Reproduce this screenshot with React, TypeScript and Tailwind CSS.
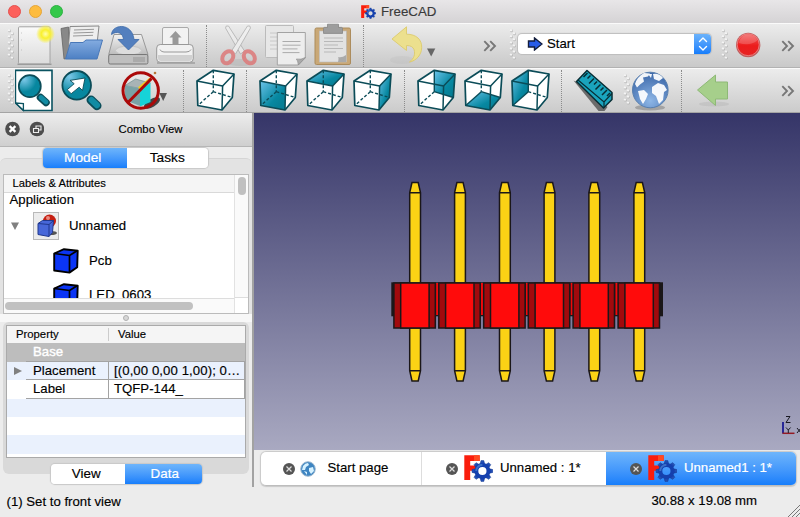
import React from "react";

type Pt = [number, number];

// Corner points of the isometric cube, relative to its own origin.
const C: Record<string, Pt> = {
  ftl: [0, 11], ftr: [25.6, 16], fbl: [0.8, 35.5], fbr: [25, 40],
  btl: [16.3, 0.3], btr: [37, 4], bbr: [35.3, 27.5], bbl: [16.3, 21.7],
};
const pts = (...names: string[]) => names.map((n) => C[n].join(",")).join(" ");

const FACES: Record<string, string[]> = {
  front: ["ftl", "ftr", "fbr", "fbl"],
  top: ["ftl", "ftr", "btr", "btl"],
  right: ["ftr", "btr", "bbr", "fbr"],
  rear: ["btl", "btr", "bbr", "bbl"],
  bottom: ["fbl", "fbr", "bbr", "bbl"],
  left: ["ftl", "btl", "bbl", "fbl"],
};

function Cell({ x, y, w, className, children }: { x: number; y: number; w: number; className: string; children: React.ReactNode }) {
  return (
    <svg viewBox={`${x} ${y} ${w} 44`} className={`-mt-px h-11 shrink-0 ${className}`}>
      {children}
    </svg>
  );
}

function ViewCube({ face, className }: { face?: string; className: string }) {
  const dash = { stroke: "#0b4c58", strokeWidth: 1.4, strokeDasharray: "3 2", fill: "none" };
  const solid = { stroke: "#0b4c58", strokeWidth: 1.4, fill: "none" };
  const vert = face === "rear" || face === "left" ? solid : dash;
  const back = face === "rear" || face === "bottom" ? solid : dash;
  const side = face === "bottom" || face === "left" ? solid : dash;
  return (
    <svg viewBox="-1 -2 39 44" className={`-mt-px h-11 w-[39px] shrink-0 ${className}`} strokeLinejoin="round">
      <polygon points={pts("ftl", "btl", "btr", "bbr", "fbr", "fbl")} fill="#fff" />
      {face && <polygon points={pts(...FACES[face])} fill="url(#teal)" />}
      <polyline points={pts("btl", "bbl")} {...vert} />
      <polyline points={pts("bbl", "bbr")} {...back} />
      <polyline points={pts("bbl", "fbl")} {...side} />
      <polygon points={pts("ftl", "btl", "btr", "bbr", "fbr", "fbl")} fill="none" stroke="#0b4c58" strokeWidth="1.7" />
      <polyline points={pts("ftl", "ftr", "btr")} fill="none" stroke="#0b4c58" strokeWidth="1.5" />
      <polyline points={pts("ftr", "fbr")} fill="none" stroke="#0b4c58" strokeWidth="1.5" />
    </svg>
  );
}

function Grip({ className }: { className: string }) {
  return (
    <svg viewBox="0 0 8 32" className={`-mt-[3px] h-8 w-2 shrink-0 ${className}`}>
      {[0, 1, 2, 3, 4].map((i) => (
        <g key={i}>
          <circle cx="2.4" cy={2.7 + i * 6.1} r="1.5" fill="#b5b5b5" />
          <circle cx="2" cy={2.2 + i * 6.1} r="1.2" fill="#f4f4f4" />
          <circle cx="5.4" cy={5.7 + i * 6.1} r="1.5" fill="#b5b5b5" />
          <circle cx="5" cy={5.2 + i * 6.1} r="1.2" fill="#f4f4f4" />
        </g>
      ))}
    </svg>
  );
}

function Sep({ className }: { className: string }) {
  return <div className={`h-[42px] w-0 shrink-0 border-l border-dotted border-[#8b8b8b] ${className}`} />;
}

function More({ className }: { className: string }) {
  return (
    <svg viewBox="0 0 14 12" className={`h-3 w-3.5 shrink-0 ${className}`} fill="none" stroke="#777" strokeWidth="1.9">
      <path d="M1.3 1.2 6 6 1.3 10.8M7.2 1.2 12 6 7.2 10.8" />
    </svg>
  );
}

function Logo({ className }: { className: string }) {
  return (
    <svg viewBox="0 0 29 27" className={`shrink-0 ${className}`}>
      <path d="M.3.3h15.4v5.8H6.2v4.5h7v5.2h-7V25H.3z" fill="#fa1d0c" />
      <path d="M10 .3h5.7v5.8H10z" fill="#ff4a22" />
      <g transform="translate(18.4 16)">
        {[0, 45, 90, 135, 180, 225, 270, 315].map((a) => (
          <path key={a} transform={`rotate(${a})`} d="M-2.4-6.5-1.4-10.4H1.4L2.4-6.5z" fill="url(#gear)" stroke="#12368c" strokeWidth=".5" />
        ))}
        <circle r="6" fill="none" stroke="#1540ae" strokeWidth="3.8" />
        <path d="M-6.2 0A6.2 6.2 0 0 1 0-6.2" fill="none" stroke="#3b70c8" strokeWidth="2" />
      </g>
    </svg>
  );
}

function Close({ className }: { className: string }) {
  return (
    <svg viewBox="0 0 12 12" className={`h-3 w-3 shrink-0 ${className}`}>
      <circle cx="6" cy="6" r="6" fill="#555" />
      <path d="m3.5 3.5 5 5m0-5-5 5" stroke="#ddd" strokeWidth="1.2" />
    </svg>
  );
}

function Defs() {
  return (
    <svg className="absolute h-0 w-0">
      <defs>
        <linearGradient id="teal" x1="0" y1="0" x2=".8" y2=".8">
          <stop offset="0" stopColor="#6cc4ea" /><stop offset=".75" stopColor="#0788a1" /><stop offset="1" stopColor="#067f96" />
        </linearGradient>
        <radialGradient id="lens" cx=".25" cy=".2" r=".8">
          <stop offset="0" stopColor="#7cc8e8" /><stop offset=".7" stopColor="#07879f" />
        </radialGradient>
        <linearGradient id="paper" x2="0" y2="1"><stop stopColor="#fafafa" /><stop offset="1" stopColor="#dcdcdc" /></linearGradient>
        <linearGradient id="metal" x2="0" y2="1"><stop stopColor="#f2f2f2" /><stop offset="1" stopColor="#bcbcbc" /></linearGradient>
        <linearGradient id="blue" x2="0" y2="1"><stop stopColor="#84ace0" /><stop offset="1" stopColor="#4d80c4" /></linearGradient>
        <radialGradient id="sun"><stop stopColor="#fffdb0" /><stop offset=".45" stopColor="#f9f02e" /><stop offset=".7" stopColor="#f8f04a" stopOpacity=".75" /><stop offset="1" stopColor="#f8f04a" stopOpacity="0" /></radialGradient>
        <radialGradient id="globe" cx=".5" cy=".8" r=".8"><stop stopColor="#8db6e6" /><stop offset="1" stopColor="#3a66a8" /></radialGradient>
        <linearGradient id="gear" x2="0" y2="1"><stop stopColor="#2a58bc" /><stop offset="1" stopColor="#0f38a8" /></linearGradient>
        <linearGradient id="rec" x2="0" y2="1"><stop stopColor="#f26060" /><stop offset=".55" stopColor="#ec1c1c" /><stop offset="1" stopColor="#e52323" /></linearGradient>
      </defs>
    </svg>
  );
}

function FileBar() {
  return (
    <div className="flex h-[45px] shrink-0 items-center border-b border-[#b2b2b2] border-t border-t-[#fafafa] bg-gradient-to-b from-[#ececec] to-[#c9c9c9]">
      <Grip className="ml-[7px]" />
      <Cell x={15} y={23} w={41} className="w-[41px]">
        <path d="M17.5 64.2h34" stroke="#999" strokeWidth="1.5" />
        <rect x="18.5" y="26.8" width="31.5" height="37" rx="1" fill="url(#paper)" stroke="#a4a4a4" />
        <path d="M21 40h.8m-.8 10h.8m-.8-17h.8" stroke="#bbb" />
        <circle cx="45.5" cy="34" r="9.5" fill="url(#sun)" />
      </Cell>
      <Cell x={56} y={23} w={50} className="w-[50px]">
        <path d="M61 28.5 68.5 27v31L64 59z" fill="#888" stroke="#666" strokeWidth=".8" />
        <path d="M70 26.5 99 26l-2 18-29 8z" fill="#eee" stroke="#888" />
        <path d="m74 30 20-.7M73.5 33l20-.7M73 36l20-.7" stroke="#999" />
        <path d="M70.5 42.5h12.5l3-2.5h16.5l-5.5 19H65.5z" fill="url(#blue)" stroke="#4978b8" />
      </Cell>
      <Cell x={106} y={23} w={46} className="w-[46px]">
        <path d="M114 34.5h27.5l6.5 20H108.7z" fill="url(#metal)" stroke="#999" />
        <ellipse cx="128.5" cy="50.5" rx="13" ry="4.5" fill="#ddd" stroke="#c5c5c5" />
        <rect x="108.7" y="54.5" width="39.2" height="9.5" rx="1.5" fill="#bfbfbf" stroke="#777" />
        <path d="M134 57v5m2-5v5m2-5v5m2-5v5m2-5v5m2-5v5" stroke="#858585" strokeWidth=".7" />
        <path d="M111.5 34.5C112 24 132 22 134 39.5h5L128.5 50 118 39.5h5.5c-.5-7-7-9-12-5z" fill="#537fbe" stroke="#3a68a8" strokeWidth=".8" />
      </Cell>
      <Cell x={152} y={23} w={47} className="w-[47px]">
        <path d="M157 63h38" stroke="#aaa" strokeWidth="2" />
        <path d="M162.5 48V29q0-1.5 1.5-1.5h23q1.5 0 1.5 1.5v19z" fill="#f2f2f2" stroke="#aaa" />
        <path d="m175.5 31 6 6.5h-3v7h-6v-7h-3z" fill="#999" />
        <rect x="156.7" y="44.5" width="36.5" height="17.8" rx="3.5" fill="#f1f1f1" stroke="#999" />
        <path d="M158 55h34v3q0 3-3 3h-28q-3 0-3-3z" fill="#d1d1d1" />
        <path d="M160 49.5q1 2.5 4 2.5h22q4 0 5-2.5" fill="none" stroke="#999" />
      </Cell>
      <Sep className="ml-[7px]" />
      <Cell x={207} y={23} w={53} className="w-[53px] opacity-70">
        <ellipse cx="241" cy="62.5" rx="13" ry="3.5" fill="#aaa" opacity=".5" />
        <path d="M225.5 28q0-3 3-2l16 25-4 3z" fill="#efefef" stroke="#999" strokeWidth=".8" />
        <path d="M250.5 28q0-3-3-2l-16 25 4 3z" fill="#f4f4f4" stroke="#999" strokeWidth=".8" />
        <ellipse cx="227.8" cy="57.3" rx="5" ry="6.5" fill="none" stroke="#df6666" strokeWidth="4" transform="rotate(35 227.8 57.3)" />
        <ellipse cx="249.3" cy="57.3" rx="5" ry="6.5" fill="none" stroke="#df6666" strokeWidth="4" transform="rotate(-35 249.3 57.3)" />
      </Cell>
      <Cell x={260} y={23} w={50} className="w-[50px]">
        <rect x="265.5" y="25.5" width="28" height="32" rx="1" fill="#e7e7e7" stroke="#bbb" />
        <path d="M270 33h14m-14 4h12m-12 4h12m-12 4h12m-12 4h8" stroke="#c8c8c8" />
        <path d="M277.3 32.5h28V58l-7 7h-21z" fill="#ededed" stroke="#a3a3a3" />
        <path d="M298.3 65q-.5-5-2-6 5 1 9-1.5z" fill="#aaa" stroke="#888" strokeWidth=".6" />
        <path d="M282.5 41.5h18m-18 3.7h18m-18 3.7h15m-15 3.7h17" stroke="#ababab" />
      </Cell>
      <Cell x={310} y={23} w={46} className="w-[46px]">
        <rect x="315" y="28" width="35.5" height="36.5" rx="1.5" fill="#c9a877" stroke="#ac8c5d" />
        <rect x="319.3" y="31" width="27" height="31" fill="#e2e2e2" stroke="#bbb" strokeWidth=".6" />
        <path d="M324 38h19m-19 3.5h19M324 45h14m-14 3.5h19M324 52h12" stroke="#b8b8b8" />
        <path d="M338 62q1-4 0-5 4 1 8-2v7z" fill="#aaa" />
        <path d="M327.5 24.2h11v3.2h3q1 0 1 1v5h-19v-5q0-1 1-1h3z" fill="#9d9d9d" stroke="#858585" strokeWidth=".8" />
      </Cell>
      <Sep className="ml-[7px]" />
      <Cell x={364} y={23} w={76} className="w-[76px]">
        <ellipse cx="402" cy="60" rx="12" ry="4" fill="#aaa" opacity=".15" />
        <path d="M392 39 406.5 26.8V34.2c10 0 15.5 5.5 15.2 13.5-.3 7.5-5.5 13-12.2 14.3 4.5-3.5 6-7.5 4.5-12.5q-1.5-4-7.5-4V50.5z" fill="#ece08e" stroke="#dccb6c" strokeWidth=".9" strokeLinejoin="round" />
        <path d="M427 48.5h8.3L431.2 56.5z" fill="#666" />
      </Cell>
      <More className="ml-[43px]" />
      <Grip className="ml-[12px]" />
      <div className="-mt-[3px] ml-px flex h-[20px] w-[193px] shrink-0 items-center overflow-hidden rounded-[4px] bg-white pl-[9px] shadow-[0_0_1px_1px_#bdbdbd]">
        <svg viewBox="0 0 16 14" className="h-3.5 w-4"><path d="M1.5 4H7.5V1L15 7 7.5 13v-3h-6z" fill="#285ce7" stroke="#131d3c" strokeWidth="1.4" /></svg>
        <span className="ml-[4px] text-[13.2px] leading-5">Start</span>
        <div className="ml-auto flex h-full w-[17px] items-center justify-center bg-gradient-to-b from-[#6bb3fb] to-[#147dfb]">
          <svg viewBox="0 0 10 14" className="h-3.5 w-2.5" fill="none" stroke="#fff" strokeWidth="1.4" strokeLinecap="round" strokeLinejoin="round"><path d="m1.5 4.5 3.5-3.5 3.5 3.5m-7 5 3.5 3.5 3.5-3.5" /></svg>
        </div>
      </div>
      <Grip className="ml-[10px]" />
      <Cell x={730} y={23} w={40} className="w-[40px]">
        <circle cx="749.2" cy="45" r="12.2" fill="#bf5b5b" /><circle cx="749.2" cy="44.7" r="11" fill="url(#rec)" stroke="#ef8a8a" strokeWidth=".8" />
        <path d="M739.7 43q2-8.5 9.5-8.5 7 0 9 6-7 6-18.5 2.5z" fill="#fff" opacity=".18" />
      </Cell>
      <More className="ml-[12px]" />
    </div>
  );
}

function ViewBar() {
  return (
    <div className="flex h-[45px] shrink-0 items-center border-b border-[#a4a4a4] border-t border-t-[#fafafa] bg-gradient-to-b from-[#ececec] to-[#cbcbcb]">
      <Grip className="ml-[7px]" />
      <Cell x={15} y={68} w={43} className="w-[43px]">
        <path d="M15.4 70.4H52v40.1H23.4l-8-7.8z" fill="#fff" stroke="#0b5361" strokeWidth="1.6" />
        <path d="m15.6 103 7.8 7.3v-6.8z" fill="#fff" stroke="#0b5361" strokeWidth="1.3" />
        <path d="m40.5 97.5 5.5 5" stroke="#0b4c58" strokeWidth="7.5" strokeLinecap="round" />
        <path d="m41 97.5 5 4.5" stroke="#118ba3" strokeWidth="4.8" strokeLinecap="round" />
        <circle cx="29.8" cy="86.2" r="11" fill="url(#lens)" stroke="#0b4c58" strokeWidth="1.7" />
      </Cell>
      <Cell x={58} y={68} w={54} className="w-[54px]">
        <path d="m91 100 6 5.7" stroke="#0b4c58" strokeWidth="9" strokeLinecap="round" />
        <path d="m91.5 100 5.5 5.2" stroke="#118ba3" strokeWidth="6" strokeLinecap="round" />
        <circle cx="76.7" cy="85.3" r="14.3" fill="url(#lens)" stroke="#0b4c58" strokeWidth="1.8" />
        <path d="m85 78-2.5 12.5-3.3-3.3-8 6.5-4-4 7-6-4.2-3.3z" fill="#fff" stroke="#0b4c58" strokeWidth=".9" />
      </Cell>
      <Cell x={112} y={68} w={58} className="w-[58px]">
        <ellipse cx="152" cy="103" rx="9" ry="4" fill="#444" transform="rotate(-30 152 103)" />
        <path d="M125 85.5 135.5 79 150.5 83 140 88.5z" fill="#a8b4b6" stroke="#688" strokeWidth=".6" />
        <path d="M125 85.5 140 88.5V106l-15-6z" fill="#79a2a5" />
        <path d="M140 88.5 150.5 83v19L140 106.5z" fill="#16d3d8" />
        <path d="m139 88.5 12-10" stroke="#f0cd1d" strokeWidth="3" />
        <circle cx="155" cy="73" r="1.3" fill="#b9773a" />
        <path d="m127.5 103 24-24.5" stroke="#ab0909" strokeWidth="3" />
        <circle cx="140.7" cy="90.5" r="17.7" fill="none" stroke="#ab0909" strokeWidth="3" />
        <path d="M159.3 93h7.7l-3.8 8z" fill="#555" />
      </Cell>
      <Sep className="ml-[13px]" />
      <ViewCube className="ml-[12px]" />
      <Sep className="ml-[11px]" />
      <ViewCube face="front" className="ml-[12px]" />
      <ViewCube face="top" className="ml-[8px]" />
      <ViewCube face="right" className="ml-[8px]" />
      <Sep className="ml-[12px]" />
      <ViewCube face="rear" className="ml-[12px]" />
      <ViewCube face="bottom" className="ml-[8px]" />
      <ViewCube face="left" className="ml-[8px]" />
      <Sep className="ml-[11px]" />
      <Cell x={563} y={68} w={60} className="w-[60px]">
        <path d="m574.5 80.5 8 3.5 26 23-3 4h-6z" fill="#6b6b6b" />
        <path d="m588 70.5 25 22v7l-8.5 8.5-27-26.5z" fill="#1aa4bd" stroke="#082e35" strokeWidth="1.5" strokeLinejoin="round" />
        <path d="m579 80 26 22 8-8.5m-8 8.5v5.5" fill="none" stroke="#082e35" strokeWidth="1.2" />
        <path d="m588.5 73-4 4m7-1.5-3 3m6.5 0-5 5m8-2-3 3m6.5 0-5 5m8-2-3 3m6.5-.5-5 5m8-2-3 3" stroke="#082e35" strokeWidth="1.5" />
      </Cell>
      <Grip className="ml-[1px]" />
      <Cell x={632} y={68} w={46} className="w-[46px]">
        <ellipse cx="651" cy="107.5" rx="15" ry="3" fill="#777" opacity=".5" />
        <circle cx="651.3" cy="90" r="17.8" fill="url(#globe)" stroke="#587fae" />
        <path d="M636 84q2-7 9-11l6 .5-2 3-5 1 1 4-4 3-3 3zM654 74q6-1 10 4l-4 3-5-2zM639 91l6-1 4 4-2 5-3 5-3-5zM653 87l6-4 6 2 3 5-3 2-1 8-4 4-3-8-4-3zM649 74l4 0-1 4z" fill="#fff" fillOpacity=".93" />
      </Cell>
      <Sep className="ml-[4px]" />
      <Cell x={683} y={68} w={56} className="w-[56px]">
        <ellipse cx="715" cy="104" rx="15" ry="2.5" fill="#aaa" opacity=".3" />
        <path d="M698.5 90 716.5 75v7h12v17h-12v6.5z" fill="#a6cf8b" stroke="#8eb977" />
      </Cell>
      <More className="ml-[43px]" />
    </div>
  );
}

function BlueCube() {
  return (
    <svg viewBox="0 0 26 26" className="h-[26px] w-[26px] shrink-0" strokeLinejoin="round">
      <path d="M1.2 5.5 11 1.2l13.7 1.5-.5 16.5-7.8 5.4L1.2 22.5z" fill="#0b35f5" stroke="#000" strokeWidth="1.9" />
      <path d="m1.2 5.5 15.3 2v17m0-17 8-5" fill="none" stroke="#000" strokeWidth="1.7" />
    </svg>
  );
}

function ComboView() {
  return (
    <div className="flex w-[254px] shrink-0 flex-col border-r-2 border-[#a2a2a2] bg-[#ececec]">
      <div className="flex h-[34px] shrink-0 items-center border-b border-[#b5b5b5] bg-gradient-to-b from-[#ededed] to-[#cfcfcf]">
        <svg viewBox="0 0 40 16" className="-mt-[2px] ml-[4px] h-4 w-10">
          <circle cx="8.5" cy="8" r="7.3" fill="#4e4e4e" /><path d="m5.6 5.1 5.8 5.8m0-5.8-5.8 5.8" stroke="#fff" strokeWidth="2.2" />
          <circle cx="33" cy="8" r="7.3" fill="#4e4e4e" /><path d="M32 7V5h5v4h-2M29.5 7.5h5v4h-5z" fill="none" stroke="#eee" strokeWidth="1.1" />
        </svg>
        <span className="-mt-px ml-[74.5px] text-[11.3px]">Combo View</span>
      </div>
      <div className="mt-[11px] flex min-h-0 flex-col rounded-t-md border-t border-[#d5d5d5] bg-[#e3e3e3]">
        <div className="-mt-[11px] ml-[43px] flex h-5 w-[165px] shrink-0 overflow-hidden rounded-[4px] text-[13.7px] leading-5 shadow-[0_0_1px_1px_#c8c8c8]">
          <div className="w-[83.5px] bg-gradient-to-b from-[#6eb5fb] to-[#167efb] pr-[4px] text-center text-white [-webkit-text-stroke:0.2px_#fff]">Model</div>
          <div className="flex-1 bg-white text-center">Tasks</div>
        </div>
        <div className="ml-[3px] mt-[6px] flex h-[140px] w-[246px] shrink-0 border border-[#bbb] bg-white">
          <div className="flex w-[230px] flex-col">
            <div className="h-[18px] shrink-0 border-b border-[#d9d9d9] bg-[#f5f5f5] pl-[8.5px] text-[11.2px] leading-[17px]">Labels &amp; Attributes</div>
            <div className="h-[105px] overflow-hidden text-[13.2px]">
              <div className="h-[15px] pl-[5.5px] leading-[14px]">Application</div>
              <div className="flex h-[35px] items-center">
                <svg viewBox="0 0 10 8" className="ml-[6px] h-2 w-2.5"><path d="M1 .5h8L5 8z" fill="#808080" /></svg>
                <div className="ml-[13px] flex h-[28px] w-[26px] justify-center border border-[#b9b9b9] bg-[#ececec] pt-[1px]">
                  <svg viewBox="0 0 24 24" className="h-6 w-6">
                    <ellipse cx="17" cy="19" rx="6" ry="2" fill="#555" /><circle cx="15.5" cy="7" r="6.5" fill="#c51f12" /><circle cx="14" cy="4" r="2" fill="#e98a80" />
                    <path d="m4 9.5 4.5-3h11l-1 12-3.5 4L4 20.5z" fill="#4767d9" stroke="#20388e" /><path d="m4 9.5 11 1v12m0-12 4.5-4" fill="none" stroke="#20388e" />
                  </svg>
                </div>
                <span className="ml-[10px]">Unnamed</span>
              </div>
              <div className="flex h-[35px] items-center pl-[49px]"><BlueCube /><span className="ml-[10px]">Pcb</span></div>
              <div className="flex h-[35px] items-center pl-[49px]"><BlueCube /><span className="-mt-[2px] ml-[10px]">LED_0603</span></div>
            </div>
            <div className="flex flex-1 items-center border-t border-[#ddd] bg-[#fafafa]"><div className="ml-[1px] h-[8px] w-[188px] rounded-full bg-[#c1c1c1]" /></div>
          </div>
          <div className="flex flex-1 flex-col border-l border-[#e2e2e2]">
            <div className="flex h-[123px] justify-center border-b border-[#ddd] bg-[#fafafa] pt-[2px]"><div className="h-[18px] w-[8px] rounded-full bg-[#c0c0c0]" /></div>
          </div>
        </div>
      </div>
      <div className="flex h-[8px] shrink-0 items-center justify-center bg-[#f7f7f7]"><div className="h-[6px] w-[6px] rounded-full border border-[#b0b0b0] bg-[#d7d7d7]" /></div>
      <div className="mx-[3px] flex h-[152px] shrink-0 flex-col rounded-md bg-[#d9d9d9] px-[3px] pt-[3px]">
        <div className="flex h-[133px] shrink-0 flex-col border border-[#aaa] bg-white text-[13.2px]">
          <div className="flex h-[17px] shrink-0 bg-[#f5f5f5] text-[11.3px] leading-[16px]">
            <div className="my-[2px] w-[102px] border-r border-[#ccc] pl-[9px] leading-[13px]">Property</div>
            <div className="pl-[9px]">Value</div>
          </div>
          <div className="h-[19px] shrink-0 bg-[#bdbdbd] pl-[19px]"><div className="h-[19px] border-b border-[#a3a3a3] pl-[7px] leading-[18px] text-white [-webkit-text-stroke:0.4px_#fff]">Base</div></div>
          <div className="flex h-[18px] shrink-0 bg-[#eaf1fd] leading-[18px]">
            <div className="flex w-[19px] items-center pl-[7px]"><svg viewBox="0 0 8 10" className="h-2.5 w-2"><path d="M0 1v8l8-4z" fill="#808080" /></svg></div>
            <div className="w-[83px] border-b border-r border-[#a3a3a3] pl-[7px]">Placement</div>
            <div className="flex-1 whitespace-nowrap border-b border-r border-[#a3a3a3] pl-[5px] tracking-[0.08px]">[(0,00 0,00 1,00); 0…</div>
          </div>
          <div className="flex h-[19px] shrink-0 pl-[19px] leading-[18px]">
            <div className="w-[83px] border-b border-r border-[#a3a3a3] pl-[7px]">Label</div>
            <div className="flex-1 border-b border-r border-[#a3a3a3] pl-[5px]">TQFP-144_</div>
          </div>
          <div className="h-[18px] bg-[#eaf1fd]" /><div className="h-[18px]" /><div className="h-[19px] bg-[#eaf1fd]" />
        </div>
        <div className="ml-[44.5px] mt-[6px] flex h-5 w-[151px] shrink-0 overflow-hidden rounded-[4px] text-[13.4px] leading-5 shadow-[0_0_1px_1px_#c8c8c8]">
          <div className="w-[74.5px] bg-white pr-[3px] text-center">View</div>
          <div className="flex-1 bg-gradient-to-b from-[#6eb5fb] to-[#167efb] pl-[3px] text-center text-white [-webkit-text-stroke:0.2px_#fff]">Data</div>
        </div>
      </div>
    </div>
  );
}

const PINS = [415.1, 460, 504.9, 549.5, 594.3, 639.3];

function Scene() {
  return (
    <svg viewBox="254 113 546 337" className="h-[337px] w-[546px] shrink-0">
      <defs><linearGradient id="sky" x2="0" y2="1"><stop stopColor="#353568" /><stop offset="1" stopColor="#a9a9c1" /></linearGradient></defs>
      <rect x="254" y="113" width="546" height="337" fill="url(#sky)" />
      <rect x="391.3" y="282.3" width="271.7" height="34" fill="#1b1719" />
      {PINS.map((x, i) => (
        <g key={x} transform={`translate(${x} 0)`} stroke="#1b1719" strokeWidth="1.5">
          {i < 5 && <rect x="21" y="283" width="3.4" height="32" fill="#f2080a" stroke="none" />}
          <path d="M-5.4 370.7V192.7L-4.6 188.5-3.1 182.5H3.1L4.6 188.5 5.4 192.7V370.7L4.6 375-3.1 381 -4.6 375z" fill="none" stroke="none" />
          <path d="M-5.4 370.7V192.7L-3.1 182.5H3.1L5.4 192.7V370.7L3.1 381H-3.1z" fill="#fbd215" />
          <path d="M-5.4 192.7H5.4M-5.4 370.7H5.4" />
          <rect x="-21.2" y="283" width="41.4" height="45" fill="#a10a0d" />
          <rect x="-14.4" y="283" width="28.4" height="45" fill="#ff0b0b" />
        </g>
      ))}
      <path d="M783 422v11.5" stroke="#1b1b94" strokeWidth="1.8" />
      <path d="M782.5 433.3h12" stroke="#941b24" strokeWidth="1.5" />
      <path d="M786 416.5h4l-4 6h4.5M786 427.5l2.3 2.5 2.3-2.5m-2.3 2.5v3M797 428l4 5m0-5-4 5" fill="none" stroke="#191923" />
    </svg>
  );
}

export default function App() {
  return (
    <div className="flex h-[517px] w-[800px] flex-col overflow-hidden bg-[#ececec] font-['Liberation_Sans',Arial,sans-serif] text-black [-webkit-text-stroke:0.15px]">
      <Defs />
      <div className="flex h-[23px] shrink-0 items-center bg-gradient-to-b from-[#e8e6e8] to-[#d5d3d5]">
        <div className="ml-[8px] flex gap-[8px]">
          <div className="h-[13px] w-[13px] rounded-full border border-[#e5504e] bg-[#fc605c]" />
          <div className="h-[13px] w-[13px] rounded-full border border-[#e5a539] bg-[#fdbc40]" />
          <div className="h-[13px] w-[13px] rounded-full border border-[#2db242] bg-[#34c84a]" />
        </div>
        <Logo className="ml-[298px] h-[14px] w-[15px]" />
        <span className="ml-[5px] text-[13.3px] text-[#3a3a3a]">FreeCAD</span>
      </div>
      <FileBar />
      <ViewBar />
      <div className="flex h-[374px] shrink-0">
        <ComboView />
        <div className="flex flex-1 flex-col">
          <Scene />
          <div className="ml-[7px] mt-[2px] flex h-[34px] w-[535px] shrink-0 items-center overflow-hidden rounded-[5px] border-b border-[#bdbdbd] bg-white text-[13.2px] shadow-[0_0_1px_1px_#c9c9c9]">
            <div className="flex h-full w-[161px] items-center border-r border-[#ddd] pl-[21.5px]">
              <Close className="mt-[1px]" />
              <svg viewBox="0 0 16 16" className="ml-[5px] h-4 w-4">
                <circle cx="8" cy="8" r="7.3" fill="#3e85c2" stroke="#a0bad0" /><path d="M3 5q2-3 5-3l1 2-3 2-1 3-3 0zM9 7l4-1 1 4-3 3-2-3zM4 10l3 1 0 3z" fill="#d7f2ff" />
              </svg>
              <span className="-mt-px ml-[12px]">Start page</span>
            </div>
            <div className="flex h-full w-[184px] items-center pl-[24px]">
              <Close className="mt-[1px]" /><Logo className="-mt-px ml-[6px] h-[27px] w-[29px]" /><span className="-mt-px ml-[7px]">Unnamed : 1*</span>
            </div>
            <div className="flex h-full flex-1 items-center bg-gradient-to-b from-[#6eb5fb] to-[#167efb] pl-[24px] text-white [-webkit-text-stroke:0.2px_#fff]">
              <Close className="mt-[1px]" /><Logo className="-mt-px ml-[6px] h-[27px] w-[29px]" /><span className="-mt-px ml-[7px]">Unnamed1 : 1*</span>
            </div>
          </div>
        </div>
      </div>
      <div className="flex h-[30px] shrink-0 items-start text-[13.2px]">
        <span className="ml-[6.5px] mt-[5px]">(1) Set to front view</span>
        <span className="ml-auto mt-[4px]">30.88 x 19.08 mm</span>
        <svg viewBox="0 0 13 13" className="ml-[30px] h-[13px] w-[13px] self-end"><path d="M1 13 13 1M5 13l8-8M9 13l4-4" stroke="#777" /></svg>
      </div>
    </div>
  );
}
